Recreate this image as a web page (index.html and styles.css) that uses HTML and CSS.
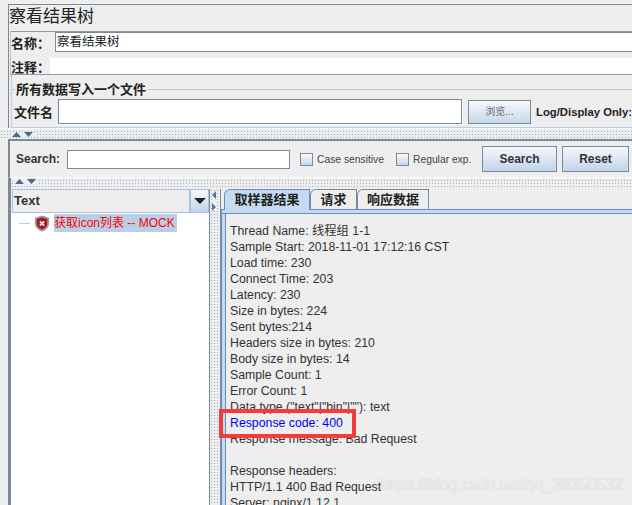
FILE: index.html
```html
<!DOCTYPE html>
<html lang="zh">
<head>
<meta charset="utf-8">
<title>察看结果树</title>
<link rel="stylesheet" href="styles.css">
</head>
<body>
<div class="app">
  <section class="top">
    <h1 class="title">察看结果树</h1>
    <div class="names">
      <div class="name-row">
        <label class="cjk-label">名称：</label>
        <div class="name-input">察看结果树</div>
      </div>
      <div class="note-row">
        <label class="cjk-label note-label">注释：</label>
        <div class="note-input"></div>
      </div>
    </div>
    <div class="fieldset">
      <div class="legend-line"><span class="legend">所有数据写入一个文件</span></div>
      <div class="file-row">
        <label class="file-label">文件名</label>
        <div class="file-input"></div>
        <div class="browse">浏览...</div>
        <span class="log-only">Log/Display Only:</span>
      </div>
    </div>
  </section>

  <div class="hsplit first">
    <svg class="arrows" width="24" height="5" viewBox="0 0 24 5"><path d="M0 5 4.500 0 9 5z" fill="#4a6a94"/><path d="M12 0h9l-4.500 5z" fill="#4a6a94"/></svg>
  </div>

  <section class="search">
    <label class="search-label">Search:</label>
    <div class="search-input"></div>
    <span class="check"></span><span class="check-label first-check">Case sensitive</span>
    <span class="check"></span><span class="check-label second-check">Regular exp.</span>
    <button class="btn btn-search">Search</button>
    <button class="btn btn-reset">Reset</button>
  </section>

  <div class="hsplit second">
    <svg class="arrows" width="24" height="5" viewBox="0 0 24 5"><path d="M0 5 4.500 0 9 5z" fill="#4a6a94"/><path d="M12 0h9l-4.500 5z" fill="#4a6a94"/></svg>
  </div>

  <section class="main">
    <aside class="left">
      <div class="combo">
        <div class="combo-text">Text</div>
        <div class="combo-btn"><svg width="12" height="6" viewBox="0 0 12 6"><path d="M0 0h12L6 6z" fill="#222"/></svg></div>
      </div>
      <div class="tree">
        <div class="tree-row">
          <span class="tree-line"></span>
          <svg class="shield" width="16" height="17" viewBox="0 0 17 18">
            <path d="M8.500.500 16 3v6c0 4-3.200 7-7.500 8.500C4.200 16 1 13 1 9V3z" fill="#9a9a9a"/>
            <path d="M8.500 2.500 14 4.300V9c0 3-2.300 5.300-5.500 6.500C5.300 14.300 3 12 3 9V4.300z" fill="#b80f1a"/>
            <path d="M6.200 6.700 10.800 11.300M10.800 6.700 6.200 11.300" stroke="#fff" stroke-width="1.700"/>
          </svg>
          <span class="tree-label">获取icon列表 -- MOCK</span>
        </div>
      </div>
    </aside>
    <div class="vsplit">
      <svg width="5" height="20" viewBox="0 0 5 20"><path d="M4 0v8L0 4z" fill="#4f76ad"/><path d="M0 12v8l4-4z" fill="#4f76ad"/></svg>
    </div>
    <div class="right">
      <div class="tabs">
        <div class="tab active">取样器结果</div>
        <div class="tab t2">请求</div>
        <div class="tab t3">响应数据</div>
      </div>
      <div class="result">
        <div class="line">Thread Name: 线程组 1-1</div>
        <div class="line">Sample Start: 2018-11-01 17:12:16 CST</div>
        <div class="line">Load time: 230</div>
        <div class="line">Connect Time: 203</div>
        <div class="line">Latency: 230</div>
        <div class="line">Size in bytes: 224</div>
        <div class="line">Sent bytes:214</div>
        <div class="line">Headers size in bytes: 210</div>
        <div class="line">Body size in bytes: 14</div>
        <div class="line">Sample Count: 1</div>
        <div class="line">Error Count: 1</div>
        <div class="line">Data type ("text"|"bin"|""): text</div>
        <div class="line code">Response code: 400</div>
        <div class="line">Response message: Bad Request</div>
        <div class="line">&nbsp;</div>
        <div class="line">Response headers:</div>
        <div class="line">HTTP/1.1 400 Bad Request</div>
        <div class="line">Server: nginx/1.12.1</div>
      </div>
    </div>
  </section>
</div>
<div class="mark"></div>
<div class="watermark">https://blog.csdn.net/qq_36350532</div>
</body>
</html>
```
FILE: styles.css
```css
* { box-sizing: border-box; }
html, body { margin: 0; padding: 0; height: 100%; overflow: hidden; }
body {
  position: relative;
  background: #eeeeee;
  color: #333;
  font: 12.300px "Liberation Sans", "Noto Sans CJK SC", sans-serif;
}
.app { height: 505px; display: flex; flex-direction: column; padding-top: 4px; overflow: hidden; }

/* top block */
.top { margin-left: 8px; height: 124px; flex: none; border-top: 1px solid #7a8a99; border-left: 1px solid #7a8a99; }
.title { margin: 0; height: 26px; font-size: 17px; font-weight: 400; line-height: 23px; color: #222; }
.names { margin-left: 1px; height: 44px; border-top: 1px solid #999; border-bottom: 1px solid #999; border-left: 1px solid #c4c4c4; }
.name-row { height: 20px; display: flex; align-items: center; }
.cjk-label { font-weight: 700; font-size: 13px; color: #222; width: 44px; flex: none; }
.name-input { flex: 1; height: 20px; background: #fff; border: 1px solid #7a8a99; border-right: 0; font-size: 12.500px; line-height: 18px; color: #222; padding-left: 1px; }
.note-row { height: 22px; display: flex; align-items: flex-end; }
.note-label { width: 39px; align-self: center; margin-top: 7px; }
.note-input { flex: 1; height: 16px; background: #fff; }
.fieldset { margin: 0 0 0 2px; height: 53px; padding-top: 7px; border-left: 1px solid #b8cfe5; border-bottom: 1px solid #b8cfe5; display: flex; flex-direction: column; }
.legend-line { height: 15px; flex: none; background: linear-gradient(transparent 7px, #b8cfe5 7px, #b8cfe5 8px, transparent 8px); margin-bottom: 2px; }
.legend { display: inline-block; background: #eee; margin-left: 3px; padding: 0 2px 0 1px; font-weight: 700; font-size: 13px; line-height: 15px; color: #222; height: 15px; vertical-align: top; }
.file-row { display: flex; align-items: center; height: 25px; }
.file-label { width: 46px; padding-left: 2px; font-weight: 700; font-size: 13px; color: #222; flex: none; }
.file-input { width: 404px; height: 25px; background: #fff; border: 1px solid #7a8a99; flex: none; box-shadow: 1px 1px 0 #fff; }
.browse { margin-left: 6px; width: 63px; height: 24px; flex: none; border: 1px solid #7a8a99; background: linear-gradient(#f7f9fc, #c6d8ea); text-align: center; font-size: 10px; line-height: 22px; color: #666; }
.log-only { margin-left: 5px; font-weight: 700; font-size: 11.300px; white-space: nowrap; color: #222; }

/* splitters */
.hsplit { flex: none; background-color: #eee; background-image: radial-gradient(circle, #a3adb8 0.7px, transparent 0.8px); background-size: 3px 3px; background-position: 0 1px; display: flex; }
.hsplit.first { height: 11px; padding: 3px 0 0 12px; border-top: 1px solid #fff; }
.hsplit.second { margin-left: 8px; padding: 1px 0 0 4px; height: 12px; border-left: 3px solid #7a8a99; border-top: 1px solid #fff; }
.arrows { display: block; background: #eee; }

/* search */
.search { margin-left: 8px; height: 38px; flex: none; border-top: 2px solid #7a8a99; border-left: 2px solid #7a8a99; display: flex; align-items: center; padding-left: 6px; }
.search-label { font-weight: 700; font-size: 12px; width: 51px; flex: none; color: #333; }
.search-input { width: 223px; height: 19px; background: #fff; border: 1px solid #7a8a99; flex: none; margin-right: 10px; }
.check { width: 13px; height: 13px; border: 1px solid #7a8a99; background: linear-gradient(#f7f9fc, #c6d8ea); flex: none; }
.check-label { font-size: 10.300px; margin-left: 4px; color: #444; white-space: nowrap; flex: none; }
.check-label.first-check { width: 79px; }
.check-label.second-check { width: 69px; }
.btn { height: 26px; font: 700 12px "Liberation Sans", sans-serif; color: #333; border: 1px solid #7a8a99; background: linear-gradient(#f7f9fc, #c0d4e8); flex: none; padding: 0; }
.btn-search { width: 75px; }
.btn-reset { width: 67px; margin-left: 5px; }

/* main */
.main { margin-left: 8px; flex: 1; display: flex; border-left: 3px solid #7a8a99; min-height: 0; }
.left { width: 199px; display: flex; flex-direction: column; flex: none; border-right: 1px solid #7a8a99; }
.combo { height: 24px; flex: none; display: flex; margin-left: 1px; }
.combo-text { flex: 1; border: 1px solid #a9c1dc; font-weight: 700; font-size: 13px; line-height: 21px; padding-left: 1px; color: #333; background: #eee; }
.combo-btn { width: 19px; flex: none; display: flex; align-items: center; justify-content: center; border: 1px solid #a9c1dc; background: linear-gradient(#f7f9fc, #c0d4e8); }
.tree { flex: 1; background: #fff; padding-top: 1px; }
.tree-row { display: flex; align-items: center; height: 18px; padding-left: 8px; }
.tree-line { width: 11px; height: 1px; background: #b8cfe5; flex: none; }
.shield { margin-left: 4px; flex: none; }
.tree-label { margin-left: 4px; background: #b8cfe5; color: #f00; font-size: 12px; line-height: 19px; height: 18px; padding-right: 2px; white-space: nowrap; }
.vsplit { width: 10px; flex: none; padding: 2px 0 0 2px; background-color: #eee; background-image: radial-gradient(circle, #a3adb8 0.7px, transparent 0.8px); background-size: 3px 3px; }
.vsplit svg { display: block; background: #eee; }
.right { flex: 1; min-width: 0; border-left: 1px solid #7a8a99; }
.tabs { display: flex; height: 20px; padding-left: 3px; }
.tab { height: 20px; border: 1px solid #7a8a99; border-bottom: 0; border-top-left-radius: 6px; font-weight: 700; font-size: 13px; line-height: 19px; text-align: center; color: #222; background: #eee; }
.tab.active { width: 86px; background: #c5daf0; border-color: #6a8cc0; position: relative; z-index: 1; margin-bottom: -1px; height: 21px; }
.tab.t2 { width: 47px; }
.tab.t3 { width: 72px; }
.result { border-top: 1px solid #6a8cc0; border-left: 1px solid #6a8cc0; box-shadow: inset 0 3px 0 #c5daf0, inset 0 4px 0 #6a8cc0, inset 3px 0 0 #c5daf0, inset 4px 0 0 #6a8cc0; height: 300px; padding: 13px 0 0 8px; }
.line { height: 16px; line-height: 16px; white-space: nowrap; color: #333; }
.line.code { color: #00f; }

/* annotations over the screenshot */
.mark { position: absolute; left: 219px; top: 409px; width: 137px; height: 29px; border: 4px solid #f53c3c; }
.watermark { position: absolute; left: 380px; top: 475px; font-size: 15.850px; line-height: 20px; color: rgba(255,255,255,.6); text-shadow: 0 0 1px rgba(120,120,120,.35); white-space: nowrap; }
```
